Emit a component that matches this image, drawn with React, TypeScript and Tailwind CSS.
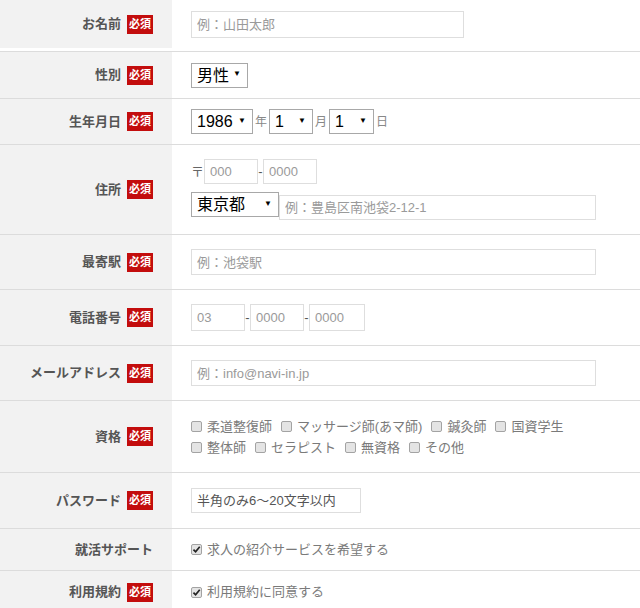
import type { ReactNode } from 'react';

// Entry form: gray label column on the left, inputs on the right,
// one bordered row per field.

const FONT = { fontFamily: '"Liberation Sans", "Noto Sans CJK JP", sans-serif' };

function Badge() {
  return (
    <span className="ml-[6px] inline-flex h-[19px] w-[26px] items-center justify-center bg-[#c30d0d] text-[11px] font-bold leading-none text-white">
      必須
    </span>
  );
}

function Row({
  label,
  required = true,
  className,
  children,
}: {
  label: string;
  required?: boolean;
  className: string;
  children: ReactNode;
}) {
  return (
    <div className={`flex border-b border-[#dcdcdc] ${className}`}>
      <div className="flex w-[172px] shrink-0 items-center justify-end bg-[#f2f2f2] pr-[19px] text-[13px] font-bold text-[#555]">
        {label}
        {required && <Badge />}
      </div>
      <div className="flex min-w-0 flex-1 flex-col justify-center pl-[19px]">
        {children}
      </div>
    </div>
  );
}

function Field({
  placeholder,
  className,
}: {
  placeholder: string;
  className: string;
}) {
  return (
    <input
      type="text"
      placeholder={placeholder}
      className={`border border-[#dedede] bg-white px-[5px] text-[13px] text-[#333] outline-none placeholder:text-[#9a9a9a] ${className}`}
    />
  );
}

function Select({
  value,
  options,
  className,
}: {
  value: string;
  options: string[];
  className: string;
}) {
  return (
    <span className={`relative inline-block shrink-0 ${className}`}>
      <select
        defaultValue={value}
        className="h-full w-full appearance-none rounded-none border border-[#a8a8a8] bg-white pl-[5px] text-[16px] text-black outline-none"
      >
        {options.map((o) => (
          <option key={o}>{o}</option>
        ))}
      </select>
      <span className="pointer-events-none absolute right-[7px] top-1/2 -translate-y-[60%] text-[8px] text-black">
        ▼
      </span>
    </span>
  );
}

function Check({ label, checked }: { label: string; checked?: boolean }) {
  return (
    <span className="inline-flex items-center">
      <span className="inline-flex h-[11px] w-[11px] shrink-0 items-center justify-center rounded-[2px] border border-[#a3a3a3] bg-[#e4e4e4]">
        {checked && (
          <svg viewBox="0 0 10 10" className="h-[9px] w-[9px]">
            <path
              d="M1.6 5.2 L4 7.6 L8.6 2"
              fill="none"
              stroke="#222"
              strokeWidth="1.9"
            />
          </svg>
        )}
      </span>
      <span className="ml-[5px] text-[13px] text-[#7a7a7a]">{label}</span>
    </span>
  );
}

const Unit = ({ children }: { children: ReactNode }) => (
  <span className="mx-[2px] text-[12px] text-[#888]">{children}</span>
);

const Dash = () => (
  <span className="w-[5px] text-center text-[13px] text-[#555]">-</span>
);

export default function App() {
  return (
    <div className="w-[640px] bg-white" style={FONT}>
      <Row label="お名前" className="h-[52px] pb-[3px]">
        <Field placeholder="例：山田太郎" className="h-[27px] w-[273px]" />
      </Row>

      <Row label="性別" className="h-[47px]">
        <div className="flex">
          <Select value="男性" options={['男性', '女性']} className="h-[25px] w-[57px]" />
        </div>
      </Row>

      <Row label="生年月日" className="h-[46px]">
        <div className="flex items-center">
          <Select value="1986" options={['1985', '1986', '1987']} className="h-[25px] w-[62px]" />
          <Unit>年</Unit>
          <Select value="1" options={['1', '2', '3']} className="h-[25px] w-[44px]" />
          <Unit>月</Unit>
          <Select value="1" options={['1', '2', '3']} className="h-[25px] w-[45px]" />
          <Unit>日</Unit>
        </div>
      </Row>

      <Row label="住所" className="h-[90px]">
        <div className="flex items-center">
          <span className="text-[13px] text-[#666]">〒</span>
          <Field placeholder="000" className="h-[25px] w-[54px]" />
          <Dash />
          <Field placeholder="0000" className="h-[25px] w-[54px]" />
        </div>
        <div className="mt-[8px] flex items-start">
          <Select value="東京都" options={['東京都', '神奈川県', '埼玉県']} className="h-[25px] w-[88px]" />
          <Field placeholder="例：豊島区南池袋2-12-1" className="mt-[3px] h-[25px] w-[317px]" />
        </div>
      </Row>

      <Row label="最寄駅" className="h-[55px]">
        <Field placeholder="例：池袋駅" className="h-[26px] w-[405px]" />
      </Row>

      <Row label="電話番号" className="h-[56px]">
        <div className="flex items-center">
          <Field placeholder="03" className="h-[27px] w-[54px]" />
          <Dash />
          <Field placeholder="0000" className="h-[27px] w-[54px]" />
          <Dash />
          <Field placeholder="0000" className="h-[27px] w-[56px]" />
        </div>
      </Row>

      <Row label="メールアドレス" className="h-[55px]">
        <Field placeholder="例：info@navi-in.jp" className="h-[26px] w-[405px]" />
      </Row>

      <Row label="資格" className="h-[72px]">
        <div className="flex flex-col gap-[4px]">
          <div className="flex gap-[9px] leading-[17px]">
            <Check label="柔道整復師" />
            <Check label="マッサージ師(あマ師)" />
            <Check label="鍼灸師" />
            <Check label="国資学生" />
          </div>
          <div className="flex gap-[9px] leading-[17px]">
            <Check label="整体師" />
            <Check label="セラピスト" />
            <Check label="無資格" />
            <Check label="その他" />
          </div>
        </div>
      </Row>

      <Row label="パスワード" className="h-[56px]">
        <input
          type="text"
          placeholder="半角のみ6〜20文字以内"
          className="h-[25px] w-[170px] border border-[#dedede] bg-white px-[5px] text-[13px] text-[#444] outline-none placeholder:text-[#555]"
        />
      </Row>

      <Row label="就活サポート" required={false} className="h-[42px]">
        <div className="flex">
          <Check label="求人の紹介サービスを希望する" checked />
        </div>
      </Row>

      <Row label="利用規約" className="h-[43px]">
        <div className="flex">
          <Check label="利用規約に同意する" checked />
        </div>
      </Row>
    </div>
  );
}
